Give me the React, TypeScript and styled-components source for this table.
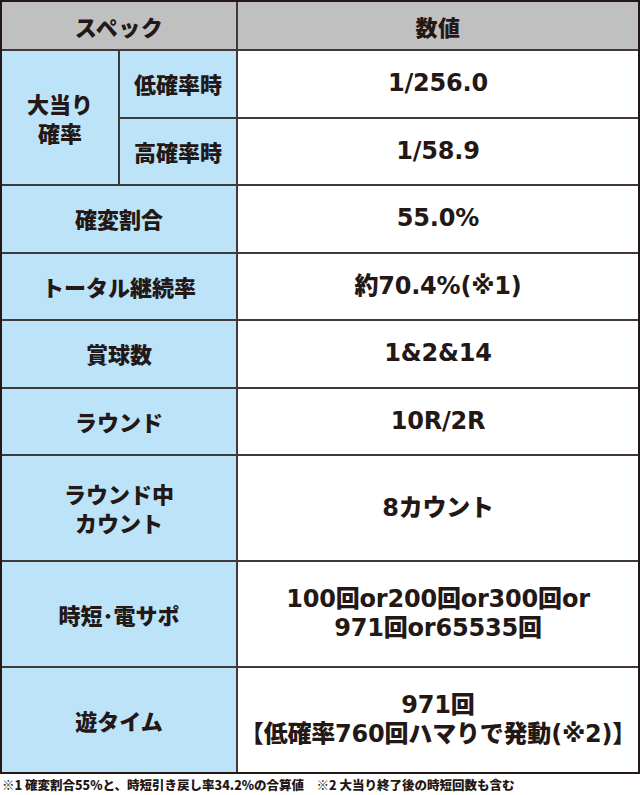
import styled, { createGlobalStyle } from "styled-components";

const GlobalStyle = createGlobalStyle`
  body {
    margin: 0;
    background: #ffffff;
    color: #231815;
    font-family: "Noto Sans CJK JP", sans-serif;
  }
`;

const Page = styled.div`
  width: 640px;
`;

const Table = styled.div`
  display: grid;
  grid-template-columns: 116px 116px 400px;
  grid-template-rows: 47px repeat(6, 65.5px) repeat(3, 104px);
  gap: 2px;
  width: 640px;
  box-sizing: border-box;
  background: #3e3a39;
  border: 2px solid #231815;
`;

const Cell = styled.div<{ $span?: number; $rows?: number }>`
  display: flex;
  align-items: center;
  justify-content: center;
  text-align: center;
  font-weight: 900;
  grid-column: span ${({ $span }) => $span ?? 1};
  grid-row: span ${({ $rows }) => $rows ?? 1};
`;

const HeadCell = styled(Cell)`
  background: #c0c0c0;
  font-size: 22px;
  letter-spacing: 0.5px;
`;

const LabelCell = styled(Cell)`
  background: #bde3f8;
  font-size: 22px;
  line-height: 29px;
`;

const ValueCell = styled(Cell)`
  background: #ffffff;
  font-family: "DejaVu Sans", "Noto Sans CJK JP", sans-serif;
  font-size: 24px;
  line-height: 29px;
  letter-spacing: -0.2px;
`;

const Note = styled.p`
  margin: 0;
  padding: 3px 0 0 2px;
  font-size: 12.5px;
  line-height: 16px;
  font-weight: 900;
  white-space: nowrap;
`;

type Row = { label: string; value: string };

const rows: Row[] = [
  { label: "確変割合", value: "55.0%" },
  { label: "トータル継続率", value: "約70.4%(※1)" },
  { label: "賞球数", value: "1&2&14" },
  { label: "ラウンド", value: "10R/2R" },
  { label: "ラウンド中\nカウント", value: "8カウント" },
  { label: "時短･電サポ", value: "100回or200回or300回or\n971回or65535回" },
  { label: "遊タイム", value: "971回\n【低確率760回ハマりで発動(※2)】" },
];

function Lines({ text }: { text: string }) {
  const parts = text.split("\n");
  return (
    <span>
      {parts.map((p, i) => (
        <span key={i}>
          {p}
          {i < parts.length - 1 && <br />}
        </span>
      ))}
    </span>
  );
}

export default function App() {
  return (
    <Page>
      <GlobalStyle />
      <Table>
        <HeadCell $span={2}>スペック</HeadCell>
        <HeadCell>数値</HeadCell>

        <LabelCell $rows={2}>
          <Lines text={"大当り\n確率"} />
        </LabelCell>
        <LabelCell>低確率時</LabelCell>
        <ValueCell>1/256.0</ValueCell>
        <LabelCell>高確率時</LabelCell>
        <ValueCell>1/58.9</ValueCell>

        {rows.map((r) => (
          <>
            <LabelCell key={r.label} $span={2}>
              <Lines text={r.label} />
            </LabelCell>
            <ValueCell key={r.label + "-v"}>
              <Lines text={r.value} />
            </ValueCell>
          </>
        ))}
      </Table>
      <Note>
        ※1 確変割合55%と、時短引き戻し率34.2%の合算値　※2 大当り終了後の時短回数も含む
      </Note>
    </Page>
  );
}
